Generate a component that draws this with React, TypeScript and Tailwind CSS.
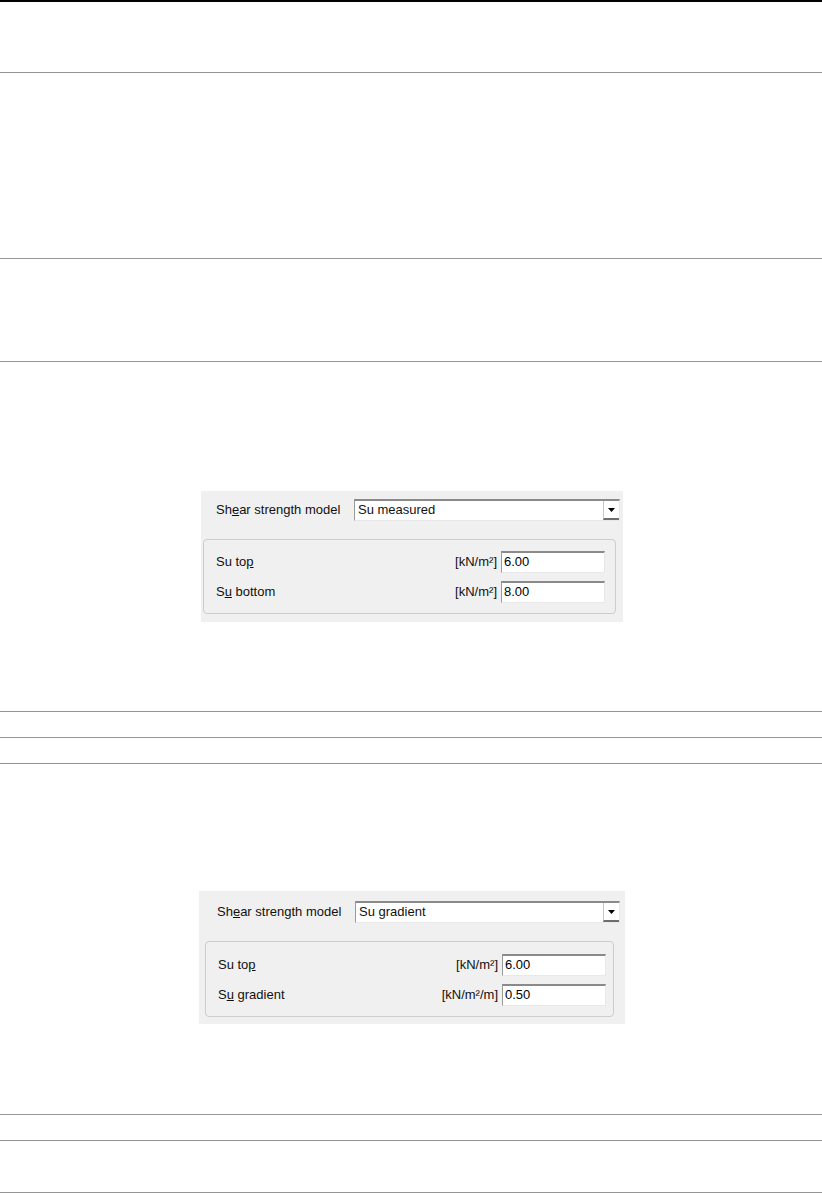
const font = { fontFamily: '"Liberation Sans", Arial, sans-serif' };

type Row = {
  label: React.ReactNode;
  unit: string;
  value: string;
};

const Field = ({ value }: { value: string }) => (
  <div className="h-[22px] w-[104px] bg-white border-t-2 border-l border-t-[#8a8a8a] border-l-[#9a9a9a] border-b border-r border-b-[#e8e8e8] border-r-[#e8e8e8] pl-[2px] text-[13px] leading-[18px] text-black">
    {value}
  </div>
);

const ShearPanel = ({
  model,
  rows,
  className,
  groupClass,
}: {
  model: string;
  rows: Row[];
  className: string;
  groupClass: string;
}) => (
  <div className={`bg-[#f0f0f0] text-[13px] text-[#111] ${className}`} style={font}>
    <div className="flex items-center">
      <span className="w-[138px] shrink-0">
        Sh<u>e</u>ar strength model
      </span>
      <div className="flex h-[22px] flex-1 bg-white border-t-2 border-l border-t-[#8a8a8a] border-l-[#9a9a9a] border-b border-r border-b-[#e8e8e8] border-r-[#e8e8e8]">
        <span className="flex-1 pl-[3px] leading-[18px]">{model}</span>
        <div className="flex w-[16px] items-center justify-center border-l border-[#c8c8c8] border-b-2 border-b-[#6e6e6e] bg-white">
          <svg width="7" height="4" viewBox="0 0 7 4">
            <path d="M0 0H7L3.5 4Z" fill="#000" />
          </svg>
        </div>
      </div>
    </div>
    <div className={`mt-[18px] rounded-[4px] border border-[#cdcdcd] pb-[10px] pl-[12px] flex flex-col gap-[8px] ${groupClass}`}>
      {rows.map((r, i) => (
        <div key={i} className="flex items-center">
          <span className="flex-1">{r.label}</span>
          <span className="mr-[4px]">{r.unit}</span>
          <Field value={r.value} />
        </div>
      ))}
    </div>
  </div>
);

const App = () => {
  return (
    <div className="w-[822px] h-[1193px] bg-white border-t-2 border-black">
      <div className="h-[71px] border-b border-[#959595]" />
      <div className="h-[186px] border-b border-[#959595]" />
      <div className="h-[103px] border-b border-[#959595]" />
      <div className="h-[350px] border-b border-[#959595] pt-[129px]">
        <ShearPanel
          className="ml-[201px] w-[422px] pt-[8px] pb-[8px] pl-[2px] pr-[3px] [&>div:first-child]:pl-[13px]"
          groupClass="mr-[4px] pr-[10px] pt-[11px]"
          model="Su measured"
          rows={[
            { label: <>Su to<u>p</u></>, unit: "[kN/m²]", value: "6.00" },
            { label: <>S<u>u</u> bottom</>, unit: "[kN/m²]", value: "8.00" },
          ]}
        />
      </div>
      <div className="h-[26px] border-b border-[#959595]" />
      <div className="h-[26px] border-b border-[#959595]" />
      <div className="h-[351px] border-b border-[#959595] pt-[127px]">
        <ShearPanel
          className="ml-[199px] w-[426px] pt-[10px] pb-[7px] pl-[6px] pr-[5px] [&>div:first-child]:pl-[12px]"
          groupClass="mr-[6px] pr-[7px] pt-[12px]"
          model="Su gradient"
          rows={[
            { label: <>Su to<u>p</u></>, unit: "[kN/m²]", value: "6.00" },
            { label: <>S<u>u</u> gradient</>, unit: "[kN/m²/m]", value: "0.50" },
          ]}
        />
      </div>
      <div className="h-[26px] border-b border-[#959595]" />
      <div className="h-[52px] border-b border-[#959595]" />
    </div>
  );
};

export default App;
